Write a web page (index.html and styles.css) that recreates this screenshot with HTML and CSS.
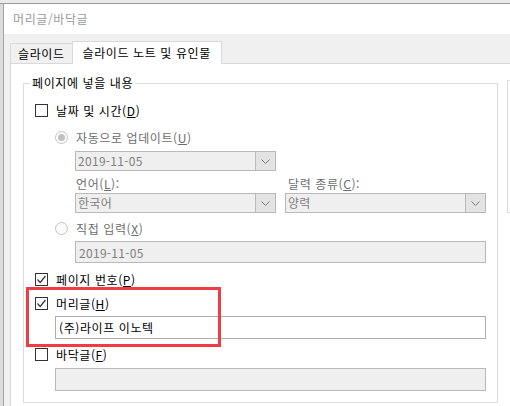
FILE: index.html
```html
<!DOCTYPE html>
<html lang="ko">
<head>
  <meta charset="UTF-8">
  <title>머리글/바닥글</title>
  <link rel="stylesheet" href="styles.css">
</head>
<body>
  <div class="screen">
    <div class="behind"></div>
    <div class="dialog">
      <div class="titlebar">머리글/바닥글</div>

      <div class="tabs">
        <div class="tab">슬라이드</div>
        <div class="tab active">슬라이드 노트 및 유인물</div>
      </div>

      <div class="page">
        <fieldset class="group">
          <legend>페이지에 넣을 내용</legend>
          <div class="group-body">
            <!-- 날짜 및 시간 -->
            <div class="row r-date">
              <span class="check"></span>
              <span>날짜 및 시간(<u>D</u>)</span>
            </div>
            <div class="row indent r-auto disabled">
              <span class="radio on"></span>
              <span>자동으로 업데이트(<u>U</u>)</span>
            </div>
            <div class="indent2 r-combo">
              <div class="combo">
                <span class="value">2019-11-05</span>
                <span class="drop"><svg width="9" height="5" viewBox="0 0 9 5"><polyline points="0.5,0.5 4.5,4.5 8.5,0.5" fill="none" stroke="#7a7a7a" stroke-width="1"/></svg></span>
              </div>
            </div>
            <div class="cols indent2 r-labels disabled">
              <div class="col"><span>언어(<u>L</u>):</span></div>
              <div class="col right"><span>달력 종류(<u>C</u>):</span></div>
            </div>
            <div class="cols indent2 r-combos">
              <div class="combo">
                <span class="value">한국어</span>
                <span class="drop"><svg width="9" height="5" viewBox="0 0 9 5"><polyline points="0.5,0.5 4.5,4.5 8.5,0.5" fill="none" stroke="#7a7a7a" stroke-width="1"/></svg></span>
              </div>
              <div class="combo second">
                <span class="value">양력</span>
                <span class="drop"><svg width="9" height="5" viewBox="0 0 9 5"><polyline points="0.5,0.5 4.5,4.5 8.5,0.5" fill="none" stroke="#7a7a7a" stroke-width="1"/></svg></span>
              </div>
            </div>
            <div class="row indent r-manual disabled">
              <span class="radio"></span>
              <span>직접 입력(<u>X</u>)</span>
            </div>
            <div class="indent2 r-fixed">
              <div class="textbox off wide">2019-11-05</div>
            </div>

            <!-- 페이지 번호 -->
            <div class="row r-page">
              <span class="check on"><svg width="11" height="11" viewBox="0 0 11 11"><polyline points="1.5,5.5 4.2,8.5 9.5,2" fill="none" stroke="#333" stroke-width="1.2"/></svg></span>
              <span>페이지 번호(<u>P</u>)</span>
            </div>

            <!-- 머리글 -->
            <div class="header-block">
              <div class="row r-header">
                <span class="check on"><svg width="11" height="11" viewBox="0 0 11 11"><polyline points="1.5,5.5 4.2,8.5 9.5,2" fill="none" stroke="#333" stroke-width="1.2"/></svg></span>
                <span>머리글(<u>H</u>)</span>
              </div>
              <div class="indent r-header-text">
                <div class="textbox">(주)라이프 이노텍</div>
              </div>
              <div class="highlight"></div>
            </div>

            <!-- 바닥글 -->
            <div class="row r-footer">
              <span class="check"></span>
              <span>바닥글(<u>F</u>)</span>
            </div>
            <div class="indent r-footer-text">
              <div class="textbox off"></div>
            </div>
          </div>
        </fieldset>
        <div class="preview"></div>
      </div>
    </div>
  </div>
</body>
</html>
```

FILE: styles.css
```css
/* General Reset */
body {
  margin: 0;
  padding: 0;
  font-family: "Noto Sans CJK KR", "Noto Sans", sans-serif;
  font-size: 12px;
  letter-spacing: 0.6px;
  color: #000;
  background: #d6d6d6;
}
.screen {
  width: 510px;
  height: 406px;
  overflow: hidden;
  background: #dcdcdc;
}
.behind {
  height: 3px;
  background: #e9e9e9;
  border-bottom: 1px solid #9a9a9a;
}
.dialog {
  margin-left: 3px;
  height: 402px;
  border-left: 1px solid #a3a3a3;
  background: #f0f0f0;
}
.titlebar {
  height: 30px;
  line-height: 30px;
  padding-left: 9px;
  background: #fff;
  color: #9b9b9b;
}

/* tabs */
.tabs {
  height: 29px;
  display: flex;
  align-items: flex-end;
  padding-left: 6px;
  box-sizing: border-box;
}
.tab {
  height: 20px;
  line-height: 19px;
  padding: 0 7px;
  border: 1px solid #d9d9d9;
  border-bottom: none;
  background: #f0f0f0;
  box-sizing: border-box;
}
.tab.active {
  height: 23px;
  line-height: 22px;
  margin-left: -1px;
  margin-bottom: -1px;
  padding: 0 10px;
  background: #fff;
  position: relative;
}

/* tab page */
.page {
  display: flex;
  align-items: flex-start;
  margin-left: 6px;
  height: 343px;
  padding: 11px 0 0 12px;
  border-left: 1px solid #d9d9d9;
  border-top: 1px solid #d9d9d9;
  background: #fff;
  box-sizing: border-box;
}
.group {
  flex-shrink: 0;
  width: 475px;
  margin: 0;
  padding: 0;
  border: 1px solid #dcdcdc;
  box-sizing: border-box;
  min-inline-size: 0;
}
.group legend {
  margin-left: 6px;
  padding: 0 2px;
  line-height: 16px;
}
.group-body {
  padding: 9px 11px 11px 11px;
}
.preview {
  flex-shrink: 0;
  width: 30px;
  height: 131px;
  margin-left: 9px;
  margin-top: 5px;
  border: 1px solid #dcdcdc;
}

/* rows */
.row {
  display: flex;
  align-items: center;
  height: 20px;
  gap: 8px;
}
.indent { padding-left: 20px; }
.indent2 { padding-left: 40px; }
.disabled { color: #6d6d6d; }

.r-auto { margin-top: 7px; }
.r-combo { margin-top: 4px; }
.r-labels { margin-top: 5px; height: 16px; line-height: 16px; }
.r-combos { margin-top: 1px; }
.r-manual { margin-top: 5px; }
.r-fixed { margin-top: 3px; }
.r-page { margin-top: 6px; }
.r-header { margin-top: 4px; }
.r-header-text { margin-top: 3px; }
.r-footer { margin-top: 5px; }
.r-footer-text { margin-top: 4px; }

.cols {
  display: flex;
}
.col {
  flex-shrink: 0;
  width: 211px;
  padding-left: 1px;
}

/* controls */
.check {
  width: 13px;
  height: 13px;
  border: 1px solid #333;
  background: #fff;
  box-sizing: border-box;
  display: flex;
  align-items: center;
  justify-content: center;
  flex-shrink: 0;
}
.radio {
  width: 13px;
  height: 13px;
  border: 1px solid #c4c4c4;
  border-radius: 50%;
  background: #fcfcfc;
  box-sizing: border-box;
  display: flex;
  align-items: center;
  justify-content: center;
  flex-shrink: 0;
}
.radio.on::after {
  content: "";
  width: 7px;
  height: 7px;
  border-radius: 50%;
  background: #c0c0c0;
}
.combo {
  flex-shrink: 0;
  width: 201px;
  height: 20px;
  display: flex;
  border: 1px solid #b9b9b9;
  background: #efefef;
  box-sizing: border-box;
  color: #808080;
}
.combo.second {
  margin-left: 9px;
}
.combo .value {
  flex: 1;
  padding-left: 2px;
  line-height: 18px;
  letter-spacing: 0.3px;
}
.combo .drop {
  width: 19px;
  border-left: 1px solid #b9b9b9;
  background: #e3e3e3;
  display: flex;
  align-items: center;
  justify-content: center;
}
.textbox {
  width: 431px;
  height: 23px;
  line-height: 21px;
  padding-left: 3px;
  border: 1px solid #adadad;
  background: #fff;
  box-sizing: border-box;
}
.textbox.off {
  background: #efefef;
  border-color: #b9b9b9;
  color: #808080;
  letter-spacing: 0.3px;
}
.textbox.wide {
  width: 411px;
  height: 22px;
}

/* red annotation */
.header-block {
  position: relative;
}
.highlight {
  position: absolute;
  left: -9px;
  top: -6px;
  width: 195px;
  height: 60px;
  border: 3px solid #ee3d45;
  box-sizing: border-box;
}
```
